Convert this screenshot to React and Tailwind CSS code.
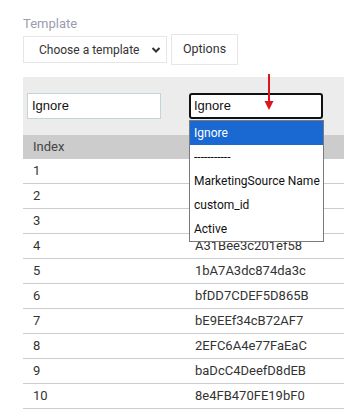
import React from 'react';

const rows = [
  ['1', ''],
  ['2', ''],
  ['3', ''],
  ['4', 'A31Bee3c201ef58'],
  ['5', '1bA7A3dc874da3c'],
  ['6', 'bfDD7CDEF5D865B'],
  ['7', 'bE9EEf34cB72AF7'],
  ['8', '2EFC6A4e77FaEaC'],
  ['9', 'baDcC4DeefD8dEB'],
  ['10', '8e4FB470FE19bF0'],
];

const options = ['Ignore', '-----------', 'MarketingSource Name', 'custom_id', 'Active'];

export default function App() {
  return (
    <div className="w-[344px] h-[412px] overflow-hidden bg-white pl-[23px] pt-[16px] font-['Roboto',sans-serif] text-[13px] text-[#333]">
      {/* Template picker */}
      <div className="text-[#9c9cae] leading-[16px]">Template</div>
      <div className="flex items-center gap-[4px] mt-[2px]">
        <div className="w-[144px] h-[27px] border border-[#e6e6e6] flex items-center justify-between pl-[15px] pr-[5px] text-[12px] text-[#333] whitespace-nowrap">
          <span>Choose a template</span>
          <svg width="10" height="8" viewBox="0 0 10 8">
            <path d="M1.5 2 L5 5.5 L8.5 2" fill="none" stroke="#333" strokeWidth="2" />
          </svg>
        </div>
        <div className="w-[67px] h-[31px] border border-[#e6e6e6] flex items-center justify-center text-[12.5px] text-[#333]">
          Options
        </div>
      </div>

      {/* Mapping area */}
      <div className="relative mt-[12px]">
        <div className="bg-[#ececec] h-[58px] flex items-start pt-[16px] pl-[4px] gap-[28px]">
          <div className="w-[134px] h-[26px] bg-white border border-[#c5d3da] flex items-center pl-[4px] font-['Liberation_Sans',sans-serif] text-[13px] text-[#111]">
            Ignore
          </div>
          <div className="w-[134px] h-[26px] bg-white border-2 border-[#111] rounded-[3px] flex items-center pl-[3px] font-['Liberation_Sans',sans-serif] text-[13px] text-[#111]">
            Ignore
          </div>
        </div>

        <div className="bg-[#cccccc] h-[24px] flex items-center pl-[10px] text-[#444]">Index</div>
        {rows.map(([i, v]) => (
          <div key={i} className="h-[25px] border-b border-[#cccccc] flex items-center text-[#333]">
            <span className="w-[172px] pl-[10px]">{i}</span>
            <span>{v}</span>
          </div>
        ))}

        {/* open dropdown */}
        <div className="absolute left-[166px] top-[43px] w-[135px] bg-white border border-[#7a7a7a] text-[#111] text-[12px] whitespace-nowrap">
          {options.map((o, idx) => (
            <div
              key={o}
              className={`h-[24px] flex items-center pl-[4px] ${idx === 0 ? 'bg-[#1a68d2] text-white' : ''}`}
            >
              {o}
            </div>
          ))}
        </div>

        {/* red arrow */}
        <svg className="absolute left-[240px] top-[-3px]" width="12" height="38" viewBox="0 0 12 38">
          <line x1="6" y1="0" x2="6" y2="28" stroke="#e0141e" strokeWidth="2" />
          <polygon points="1.5,27 10.5,27 6,36" fill="#e0141e" />
        </svg>
      </div>
    </div>
  );
}
